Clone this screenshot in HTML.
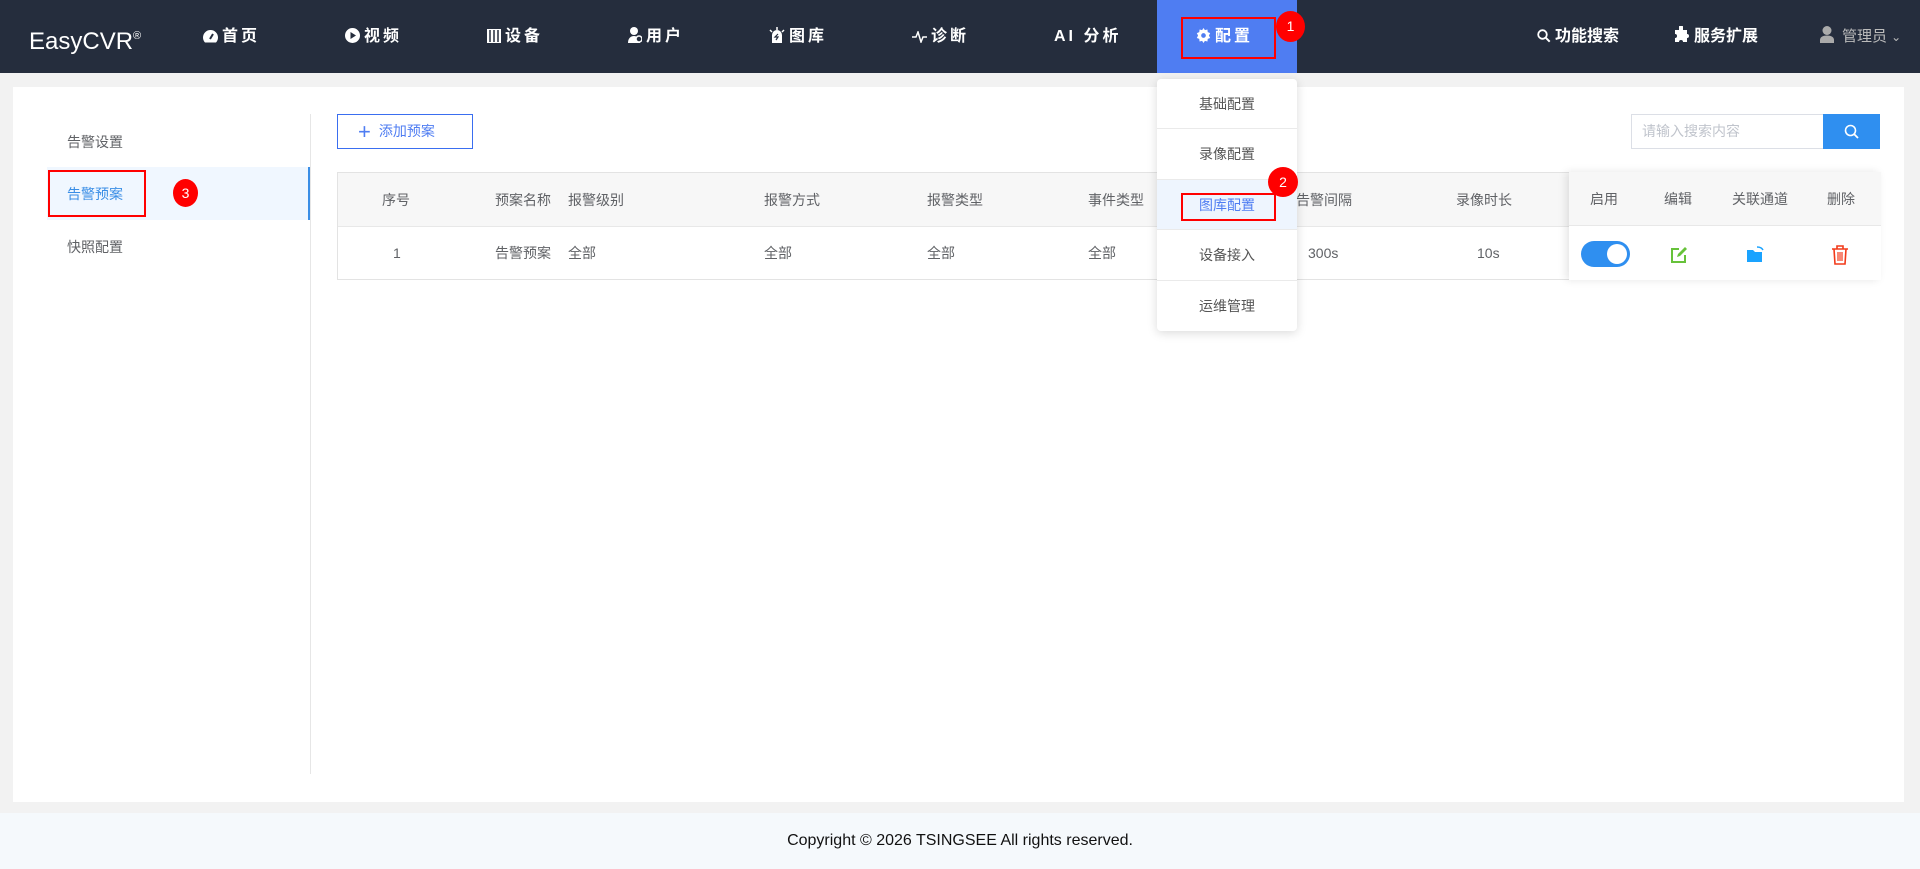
<!DOCTYPE html>
<html><head><meta charset="utf-8">
<style>
*{margin:0;padding:0;box-sizing:border-box}
body{width:1920px;height:869px;overflow:hidden;background:#f2f2f2;font-family:"Liberation Sans","Noto Sans CJK SC",sans-serif;font-size:14px;color:#606266;position:relative}
.a{position:absolute}
.nav{left:0;top:0;width:1920px;height:73px;background:#252d3d}
.ni{position:absolute;top:0;height:73px;line-height:73px;color:#fff;font-weight:bold;font-size:16px;letter-spacing:3px;white-space:nowrap}
.ni svg{vertical-align:-2px;margin-right:4px}
.card{left:13px;top:87px;width:1891px;height:715px;background:#fff}
.foot{left:0;top:813px;width:1920px;height:56px;background:#f5f9fc;text-align:center;line-height:56px;color:#111;font-size:16px}
.th{position:absolute;top:0;height:54px;line-height:54px;color:#606266;white-space:nowrap}
.td{position:absolute;top:54px;height:53px;line-height:53px;color:#606266;white-space:nowrap}
.dd{left:1157px;top:79px;width:140px;height:252px;background:#fff;border-radius:4px;box-shadow:0 2px 10px rgba(0,0,0,.15)}
.di{height:50.4px;line-height:50.4px;text-align:center;color:#555;border-bottom:1px solid #eaeaea}
.badge{position:absolute;border-radius:50%;background:#f00;color:#fff;text-align:center;font-size:14px}
.rb{position:absolute;border:2px solid #f00}
</style></head><body>
<div class="a nav"></div>
<div class="a" style="left:29px;top:0;height:73px;line-height:73px;color:#fff;font-size:24px">EasyCVR<sup style="font-size:11px;vertical-align:10px">®</sup></div>
<div class="ni" style="left:203px"><svg width="15" height="13" viewBox="0 0 15 13"><path d="M7.5 0A7.5 7.5 0 0 0 0 7.5c0 2 .8 3.8 2 5h11c1.2-1.2 2-3 2-5A7.5 7.5 0 0 0 7.5 0z" fill="#fff"/><path d="M7 9L10 4" stroke="#252d3d" stroke-width="2"/></svg>首页</div>
<div class="ni" style="left:345px"><svg width="15" height="15" viewBox="0 0 15 15"><circle cx="7.5" cy="7.5" r="7.5" fill="#fff"/><path d="M5.5 4v7l5.5-3.5z" fill="#252d3d"/></svg>视频</div>
<div class="ni" style="left:487px"><svg width="14" height="14" viewBox="0 0 14 14"><rect width="14" height="14" fill="#fff"/><path d="M3 1v12M7 1v12M11 1v12" stroke="#252d3d" stroke-width="1.5"/></svg>设备</div>
<div class="ni" style="left:628px"><svg width="14" height="16" viewBox="0 0 14 16"><circle cx="6" cy="4" r="4" fill="#fff"/><path d="M0 16c0-5 3-7 6-7s6 2 6 7z" fill="#fff"/><circle cx="11" cy="12" r="3" fill="#252d3d" stroke="#fff" stroke-width="1.5"/></svg>用户</div>
<div class="ni" style="left:769px"><svg width="16" height="16" viewBox="0 0 16 16"><path d="M3 16V8a5 5 0 0 1 10 0v8z" fill="#fff"/><path d="M8 0v3M1 3l2 2M15 3l-2 2" stroke="#fff" stroke-width="1.5"/><path d="M9 7l-3 3h3l-2 3" stroke="#252d3d" stroke-width="1.2" fill="none"/></svg>图库</div>
<div class="ni" style="left:912px"><svg width="15" height="12" viewBox="0 0 15 12"><path d="M0 6h4l2-5 3 10 2-5h4" stroke="#fff" stroke-width="1.5" fill="none"/></svg>诊断</div>
<div class="ni" style="left:1054px">AI 分析</div>
<div class="a" style="left:1157px;top:0;width:140px;height:73px;background:#4f7df2"></div>
<div class="ni" style="left:1196px"><svg width="15" height="15" viewBox="0 0 16 16"><path d="M8 0l1.5 2.3 2.7-.7.3 2.8 2.6 1-1.3 2.6 1.3 2.6-2.6 1-.3 2.8-2.7-.7L8 16l-1.5-2.3-2.7.7-.3-2.8-2.6-1L2.2 8 .9 5.4l2.6-1 .3-2.8 2.7.7z" fill="#fff"/><circle cx="8" cy="8" r="2.5" fill="#4f7df2"/></svg>配置</div>
<div class="rb" style="left:1181px;top:17px;width:95px;height:42px"></div>
<div class="badge" style="left:1276px;top:11px;width:29px;height:31px;line-height:31px">1</div>
<div class="ni" style="left:1537px;letter-spacing:0"><svg width="14" height="14" viewBox="0 0 14 14"><circle cx="5.5" cy="5.5" r="4.3" stroke="#fff" stroke-width="1.8" fill="none"/><path d="M8.7 8.7l4 4" stroke="#fff" stroke-width="2"/></svg>功能搜索</div>
<div class="ni" style="left:1673px;letter-spacing:0"><svg width="17" height="17" viewBox="0 0 17 17"><path d="M6 1a2 2 0 0 1 4 0v3h4v4a2 2 0 0 1 0 4v4h-4a2 2 0 0 0-4 0H2v-4a2 2 0 0 0 0-4V4h4z" fill="#fff"/></svg>服务扩展</div>
<div class="a" style="left:1820px;top:0;height:73px;line-height:73px;color:#bbb;font-size:15px;white-space:nowrap"><svg width="14" height="17" viewBox="0 0 14 17" style="vertical-align:-2px;margin-right:8px"><circle cx="7" cy="4.5" r="4.5" fill="#aaa"/><path d="M0 17v-3c0-3 3-4.5 7-4.5s7 1.5 7 4.5v3z" fill="#aaa"/></svg>管理员 <span style="font-size:12px">&#8964;</span></div>

<div class="a card"></div>
<div class="a" style="left:67px;top:128px;height:28px;line-height:28px">告警设置</div>
<div class="a" style="left:47px;top:167px;width:263px;height:53px;background:#f0f7ff;border-right:2px solid #3a8ee6"></div>
<div class="a" style="left:67px;top:180px;height:28px;line-height:28px;color:#3a8ee6">告警预案</div>
<div class="rb" style="left:48px;top:170px;width:98px;height:47px"></div>
<div class="badge" style="left:173px;top:179px;width:25px;height:28px;line-height:28px">3</div>
<div class="a" style="left:67px;top:233px;height:28px;line-height:28px">快照配置</div>
<div class="a" style="left:310px;top:114px;width:1px;height:660px;background:#e6e6e6"></div>

<div class="a" style="left:337px;top:114px;width:136px;height:35px;border:1px solid #3a6ef0;color:#4f7df2;line-height:33px;padding-left:20px;font-size:14px"><span style="font-size:22px;vertical-align:-3px;margin-right:8px;font-weight:300">+</span>添加预案</div>
<div class="a" style="left:1631px;top:114px;width:193px;height:35px;border:1px solid #dcdfe6;color:#c0c4cc;line-height:33px;padding-left:10px">请输入搜索内容</div>
<div class="a" style="left:1823px;top:114px;width:57px;height:35px;background:#2f8ff0"><svg width="16" height="16" viewBox="0 0 16 16" style="position:absolute;left:21px;top:10px"><circle cx="6.5" cy="6.5" r="5" stroke="#fff" stroke-width="1.6" fill="none"/><path d="M10 10l4 4" stroke="#fff" stroke-width="1.8"/></svg></div>

<div class="a" style="left:337px;top:172px;width:1543px;height:108px;border:1px solid #e3e3e3;background:#fff">
<div style="position:absolute;left:0;top:0;width:100%;height:54px;background:#f7f7f7;border-bottom:1px solid #e8e8e8"></div>
<div class="th" style="left:44px">序号</div><div class="th" style="left:157px">预案名称</div><div class="th" style="left:230px">报警级别</div><div class="th" style="left:426px">报警方式</div><div class="th" style="left:589px">报警类型</div><div class="th" style="left:750px">事件类型</div><div class="th" style="left:958px">告警间隔</div><div class="th" style="left:1118px">录像时长</div>
<div class="td" style="left:55px">1</div><div class="td" style="left:157px">告警预案</div><div class="td" style="left:230px">全部</div><div class="td" style="left:426px">全部</div><div class="td" style="left:589px">全部</div><div class="td" style="left:750px">全部</div><div class="td" style="left:970px">300s</div><div class="td" style="left:1139px">10s</div>
<div style="position:absolute;left:1231px;top:-1px;width:312px;height:108px;background:#fff;box-shadow:-3px 0 8px rgba(0,0,0,.1)">
<div style="position:absolute;left:0;top:0;width:100%;height:54px;background:#f7f7f7;border-bottom:1px solid #e8e8e8"></div>
<div class="th" style="left:21px">启用</div><div class="th" style="left:95px">编辑</div><div class="th" style="left:163px">关联通道</div><div class="th" style="left:258px">删除</div>
<div style="position:absolute;left:12px;top:69px;width:49px;height:26px;border-radius:13px;background:#2f8ff0"><div style="position:absolute;right:3px;top:3px;width:20px;height:20px;border-radius:50%;background:#fff"></div></div>
<svg style="position:absolute;left:101px;top:74px" width="18" height="18" viewBox="0 0 18 18"><path d="M9 3H2v13h13V9" stroke="#67c23a" stroke-width="2" fill="none"/><path d="M7 11l1-3 7-7 2 2-7 7z" fill="#67c23a"/></svg>
<svg style="position:absolute;left:177px;top:74px" width="18" height="18" viewBox="0 0 18 18"><path d="M1 4h6l2 2h7v10H1z" fill="#1aa3ff"/><path d="M11 1c3 0 5 1 6 3" stroke="#1aa3ff" stroke-width="1.5" fill="none"/></svg>
<svg style="position:absolute;left:262px;top:73px" width="18" height="20" viewBox="0 0 18 20"><path d="M1 4h16M6 4V1h6v3M3 4l1 15h10l1-15" stroke="#f23a1a" stroke-width="1.6" fill="none"/><path d="M7 7v9M9 7v9M11 7v9" stroke="#f23a1a" stroke-width="1.2"/></svg>
</div>
</div>

<div class="a dd"><div class="di">基础配置</div><div class="di">录像配置</div><div class="di" style="background:#eef5fe;color:#4f7df2">图库配置</div><div class="di">设备接入</div><div class="di" style="border:0">运维管理</div></div>
<div class="rb" style="left:1181px;top:193px;width:95px;height:28px"></div>
<div class="badge" style="left:1268px;top:167px;width:30px;height:30px;line-height:30px">2</div>

<div class="a foot">Copyright © 2026 TSINGSEE All rights reserved.</div>
</body></html>
